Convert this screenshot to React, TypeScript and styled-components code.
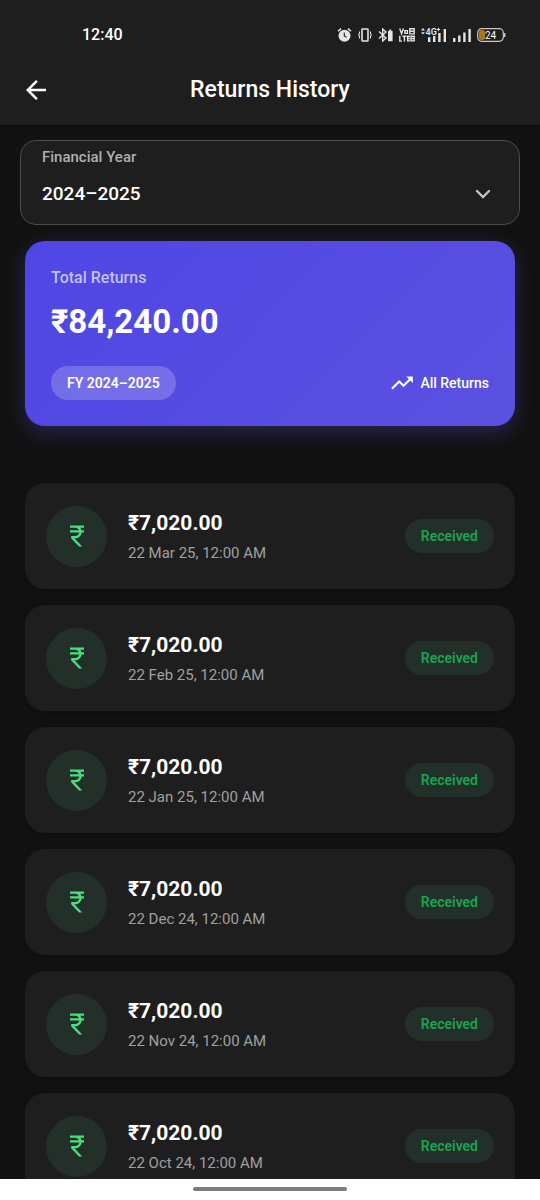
import React from "react";
import styled, { createGlobalStyle } from "styled-components";
import { MdArrowBack, MdCurrencyRupee, MdTrendingUp } from "react-icons/md";

const GlobalStyle = createGlobalStyle`
  * { box-sizing: border-box; }
  body {
    margin: 0;
    background: #121212;
    color: #ffffff;
    font-family: Roboto, "Noto Sans", sans-serif;
  }
  h1, h2, p, ul { margin: 0; padding: 0; }
`;

const Screen = styled.div`
  display: flex;
  flex-direction: column;
  height: 100vh;
`;

const Header = styled.header`
  position: relative;
  flex: none;
  background: #1e1e1e;
  box-shadow: 0 1px 3px rgba(0, 0, 0, 0.4);
`;

const StatusBar = styled.div`
  display: flex;
  align-items: center;
  justify-content: space-between;
  height: 54px;
  padding: 15px 34px 0 82px;
`;

const Clock = styled.time`
  font-size: 16px;
  line-height: 20px;
  font-weight: 500;
`;

const StatusIcons = styled.div`
  display: flex;
  align-items: center;
  gap: 6px;
  color: #e4e4e4;

  svg {
    display: block;
  }
`;

const AppBar = styled.div`
  display: grid;
  grid-template-columns: 32px 1fr 32px;
  align-items: center;
  height: 71px;
  padding: 0 20px;
`;

const BackButton = styled.button`
  display: flex;
  align-items: center;
  justify-content: center;
  width: 32px;
  height: 32px;
  padding: 0;
  border: 0;
  background: none;
  color: #ffffff;
  cursor: pointer;
`;

const Title = styled.h1`
  font-size: 23px;
  line-height: 28px;
  font-weight: 500;
  text-align: center;
`;

const Content = styled.main`
  flex: 1;
  min-height: 0;
  overflow-y: auto;
  scrollbar-width: none;
  padding: 15px 20px;
`;

const YearField = styled.div`
  position: relative;
  border: 1px solid #4b4b4b;
  border-radius: 16px;
  background: #1e1e1e;
`;

const YearLabel = styled.label`
  display: block;
  padding: 6px 21px 0;
  font-size: 15px;
  line-height: 20px;
  font-weight: 500;
  color: #b0b0b0;
`;

const YearSelect = styled.select`
  display: block;
  width: 100%;
  height: 57px;
  padding: 0 21px 5px;
  border: 0;
  border-radius: 16px;
  appearance: none;
  background: none;
  color: #ffffff;
  font-family: inherit;
  font-size: 19px;
  font-weight: 500;
  outline: none;
`;

const Chevron = styled.svg`
  position: absolute;
  right: 20px;
  bottom: 14px;
  pointer-events: none;
`;

const TotalCard = styled.section`
  margin: 16px 5px 0;
  padding: 26px;
  border-radius: 20px;
  background: linear-gradient(135deg, #4f46e5, #5b51e0);
  box-shadow: 0 6px 20px rgba(91, 81, 224, 0.3);
`;

const TotalLabel = styled.h2`
  font-size: 16px;
  line-height: 22px;
  font-weight: 500;
  color: #c3bff6;
`;

const TotalAmount = styled.p`
  margin-top: 13px;
  font-size: 33px;
  line-height: 40px;
  font-weight: 700;
`;

const TotalFooter = styled.div`
  display: flex;
  align-items: center;
  justify-content: space-between;
  margin-top: 24px;
`;

const YearPill = styled.span`
  padding: 7px 16px;
  border-radius: 17px;
  background: rgba(255, 255, 255, 0.2);
  font-size: 14px;
  line-height: 20px;
  font-weight: 600;
`;

const Trend = styled.span`
  display: flex;
  align-items: center;
  gap: 5px;
  font-size: 14px;
  line-height: 20px;
  font-weight: 500;
`;

const ReturnList = styled.ul`
  display: flex;
  flex-direction: column;
  gap: 16px;
  margin: 57px 5px 0;
  list-style: none;
`;

const ReturnRow = styled.li`
  display: flex;
  align-items: center;
  gap: 21px;
  padding: 20px 21px;
  min-height: 106px;
  border-radius: 20px;
  background: #1e1e1e;
  box-shadow: 0 2px 8px rgba(0, 0, 0, 0.25);
`;

const RupeeBadge = styled.span`
  display: flex;
  align-items: center;
  justify-content: center;
  flex: none;
  width: 61px;
  height: 61px;
  border-radius: 50%;
  background: #223029;
  color: #4ade80;
`;

const ReturnInfo = styled.div`
  flex: 1;
`;

const ReturnAmount = styled.p`
  font-size: 21px;
  line-height: 28px;
  font-weight: 700;
`;

const ReturnDate = styled.p`
  margin-top: 6px;
  font-size: 15px;
  line-height: 20px;
  color: #a0a0a0;
`;

const StatusPill = styled.span`
  padding: 7px 16px;
  border-radius: 17px;
  background: #223029;
  color: #1ba350;
  font-size: 14px;
  line-height: 20px;
  font-weight: 600;
`;

const HomeBar = styled.footer`
  display: flex;
  justify-content: center;
  flex: none;
  height: 21px;
  padding-top: 8px;
  background: #ffffff;
`;

const HomeHandle = styled.span`
  width: 154px;
  height: 4px;
  border-radius: 2px;
  background: #7c7c7c;
`;

const AlarmIcon = () => (
  <svg width="15" height="16" viewBox="0 0 15 16">
    <circle cx="7.5" cy="8.7" r="6" fill="currentColor" />
    <path d="M1 4.2 4 1.6M14 4.2 11 1.6" stroke="currentColor" strokeWidth="1.5" />
    <path d="M7.3 5.4v3.6l2.3 1.3" fill="none" stroke="#1e1e1e" strokeWidth="1.1" />
  </svg>
);

const VibrateIcon = () => (
  <svg width="14" height="14" viewBox="0 0 14 14" fill="none" stroke="currentColor">
    <rect x="4" y="1" width="6" height="12" rx=".6" strokeWidth="1.6" />
    <path d="M1.5 3.5v2.2l-.9 1.3.9 1.3v2.2M12.5 3.5v2.2l.9 1.3-.9 1.3v2.2" strokeWidth="1.1" />
  </svg>
);

const BluetoothIcon = () => (
  <svg width="15" height="14" viewBox="0 0 15 14">
    <path
      d="M1 3.6 8 10 4.7 13V1L8 4 1 10.4"
      fill="none"
      stroke="currentColor"
      strokeWidth="1.4"
    />
    <path d="M10 3h1.3V1.6h2V3h1.3v10.2H10z" fill="currentColor" />
  </svg>
);

const VolteIcon = () => (
  <svg width="16" height="14" viewBox="0 0 16 14" fill="none" stroke="currentColor" strokeWidth="1.4">
    <path d="M.7.6 2.6 5.8 4.5.6M5.9 2.6h2.5v2.8H5.9zM10.8.7h4.4v5.2h-4.4zM10.8 3.2h4.4" />
    <path d="M.8 7.8v5.3H3M3.4 8.2h4M5.4 8.2v5.2M11 8.2H8.6v4.7H11M8.6 10.5h2.2M12 8.2h3.2v4.7H12zM12 10.5h3.2" />
  </svg>
);

const MobileDataIcon = () => (
  <svg width="26" height="16" viewBox="0 0 26 16" fill="currentColor">
    <path d="M0 3.4 2 1l2 2.4zM0 5.2h4L2 7.6z" />
    <text x="4.6" y="7.6" fontFamily="Roboto, sans-serif" fontSize="9" fontWeight="600">
      4G
    </text>
    <path d="M16.9.8h1v1.2h1.2v1h-1.2v1.2h-1V3h-1.2V2h1.2z" />
    <path d="M7 10.2h2.4V15H7zM12 9h2.4v6H12zM17.2 6h2.4v9h-2.4zM22.6 2H25v13h-2.4z" />
  </svg>
);

const SignalIcon = () => (
  <svg width="18" height="14" viewBox="0 0 18 14" fill="currentColor">
    <path d="M0 10h2.4v4H0zM5.1 7.5h2.4V14H5.1zM10.2 4.5h2.4V14h-2.4zM15.4 1h2.4v13h-2.4z" />
  </svg>
);

const BatteryIcon = () => (
  <svg width="29" height="14" viewBox="0 0 29 14">
    <rect x="2" y="2" width="6" height="10" rx="2" fill="#a8790f" />
    <rect
      x=".7"
      y=".7"
      width="25.6"
      height="12.6"
      rx="4"
      fill="none"
      stroke="#c9c9c9"
      strokeWidth="1.2"
    />
    <path d="M27.7 5v4" stroke="#c9c9c9" strokeWidth="1.4" />
    <text
      x="13.5"
      y="10.7"
      textAnchor="middle"
      fontFamily="Roboto, sans-serif"
      fontSize="10"
      fontWeight="400"
      fill="#ffffff"
    >
      24
    </text>
  </svg>
);

const returns = [
  "22 Mar 25, 12:00 AM",
  "22 Feb 25, 12:00 AM",
  "22 Jan 25, 12:00 AM",
  "22 Dec 24, 12:00 AM",
  "22 Nov 24, 12:00 AM",
  "22 Oct 24, 12:00 AM",
].map((date) => ({ date, amount: "₹7,020.00", status: "Received" }));

export default function App() {
  return (
    <Screen>
      <GlobalStyle />
      <Header>
        <StatusBar>
          <Clock>12:40</Clock>
          <StatusIcons aria-hidden="true">
            <AlarmIcon />
            <VibrateIcon />
            <BluetoothIcon />
            <VolteIcon />
            <MobileDataIcon />
            <SignalIcon />
            <BatteryIcon />
          </StatusIcons>
        </StatusBar>
        <AppBar>
          <BackButton type="button" aria-label="Back">
            <MdArrowBack size={30} />
          </BackButton>
          <Title>Returns History</Title>
        </AppBar>
      </Header>
      <Content>
        <YearField>
          <YearLabel htmlFor="financial-year">Financial Year</YearLabel>
          <YearSelect id="financial-year" defaultValue="2024–2025">
            <option>2024–2025</option>
          </YearSelect>
          <Chevron
            width="32"
            height="32"
            viewBox="0 0 32 32"
            fill="none"
            stroke="#c4c4c4"
            strokeWidth="2.4"
            strokeLinecap="round"
            aria-hidden="true"
          >
            <path d="m10 13 6 6 6-6" />
          </Chevron>
        </YearField>
        <TotalCard>
          <TotalLabel>Total Returns</TotalLabel>
          <TotalAmount>₹84,240.00</TotalAmount>
          <TotalFooter>
            <YearPill>FY 2024–2025</YearPill>
            <Trend>
              <MdTrendingUp size={26} aria-hidden="true" />
              All Returns
            </Trend>
          </TotalFooter>
        </TotalCard>
        <ReturnList>
          {returns.map((item) => (
            <ReturnRow key={item.date}>
              <RupeeBadge>
                <MdCurrencyRupee size={28} aria-hidden="true" />
              </RupeeBadge>
              <ReturnInfo>
                <ReturnAmount>{item.amount}</ReturnAmount>
                <ReturnDate>{item.date}</ReturnDate>
              </ReturnInfo>
              <StatusPill>{item.status}</StatusPill>
            </ReturnRow>
          ))}
        </ReturnList>
      </Content>
      <HomeBar>
        <HomeHandle />
      </HomeBar>
    </Screen>
  );
}
